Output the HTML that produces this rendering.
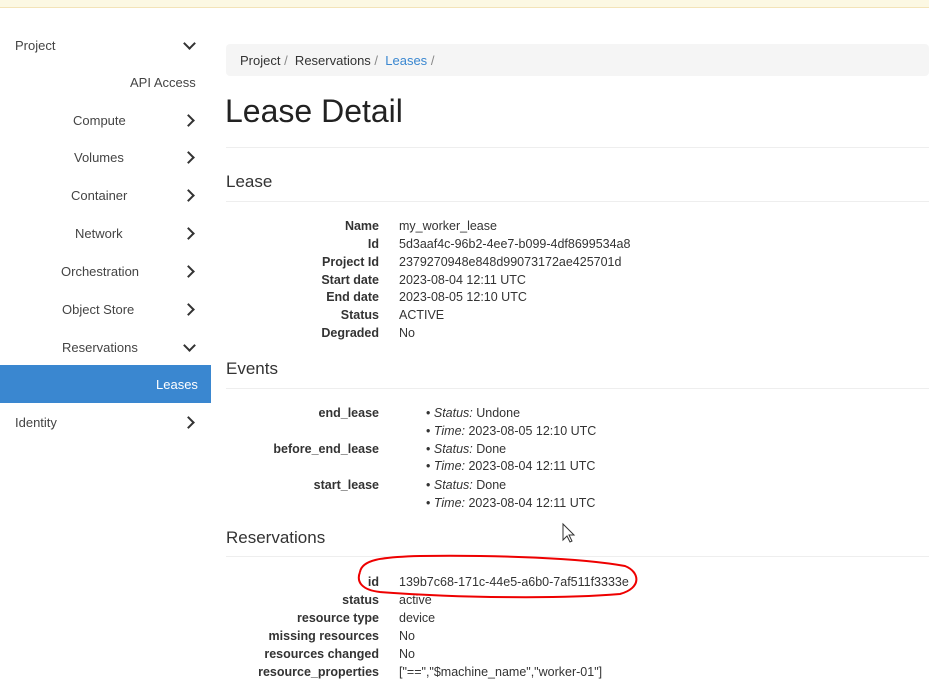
<!DOCTYPE html><html><head><style>
body{margin:0;width:929px;height:679px;overflow:hidden;background:#fff;font-family:"Liberation Sans",sans-serif;color:#333;position:relative}
.a{position:absolute;white-space:nowrap}
.banner{position:absolute;left:0;top:0;width:929px;height:7px;background:#fcf8e3;border-bottom:1px solid #f3e3b8}
.nav{font-size:13px;color:#444}
.chev{position:absolute;width:7px;height:7px;border-right:2.5px solid #333;border-bottom:2.5px solid #333}
.r{transform:rotate(-45deg)}.d{transform:rotate(45deg)}
.lbl{font-size:12.5px;font-weight:bold;text-align:right;width:200px;left:179px}
.val{font-size:12.5px;left:399px}
.hr{position:absolute;left:226px;width:703px;height:1px;background:#eee}
h2{margin:0;font-weight:normal;font-size:17px}
</style></head><body>
<div class="banner"></div>
<div class="a nav" style="left:15px;top:38px">Project</div><div class="chev d" style="left:185px;top:39px"></div>
<div class="a nav" style="left:130px;top:75px">API Access</div>
<div class="a nav" style="left:73px;top:113px">Compute</div><div class="chev r" style="left:184px;top:116px"></div>
<div class="a nav" style="left:74px;top:150px">Volumes</div><div class="chev r" style="left:184px;top:153px"></div>
<div class="a nav" style="left:71px;top:188px">Container</div><div class="chev r" style="left:184px;top:191px"></div>
<div class="a nav" style="left:75px;top:226px">Network</div><div class="chev r" style="left:184px;top:229px"></div>
<div class="a nav" style="left:61px;top:264px">Orchestration</div><div class="chev r" style="left:184px;top:267px"></div>
<div class="a nav" style="left:62px;top:302px">Object Store</div><div class="chev r" style="left:184px;top:305px"></div>
<div class="a nav" style="left:62px;top:340px">Reservations</div><div class="chev d" style="left:185px;top:341px"></div>
<div class="a" style="left:0;top:365px;width:211px;height:38px;background:#3a87d0"></div>
<div class="a nav" style="left:156px;top:377px;color:#fff">Leases</div>
<div class="a nav" style="left:15px;top:415px">Identity</div><div class="chev r" style="left:184px;top:418px"></div>

<div class="a" style="left:226px;top:44px;width:703px;height:32px;background:#f5f5f5;border-radius:4px"></div>
<div class="a" style="left:240px;top:53px;font-size:13px">Project <span style="color:#888">/</span>&nbsp; Reservations <span style="color:#888">/</span>&nbsp; <span style="color:#3a87d0">Leases</span> <span style="color:#888">/</span></div>
<div class="a" style="left:225px;top:93px;font-size:32px;color:#222">Lease Detail</div>
<div class="hr" style="top:147px"></div>
<div class="a" style="left:226px;top:172px"><h2>Lease</h2></div>
<div class="hr" style="top:201px"></div>
<div class="a lbl" style="top:219px">Name</div><div class="a val" style="top:219px">my_worker_lease</div>
<div class="a lbl" style="top:237px">Id</div><div class="a val" style="top:237px">5d3aaf4c-96b2-4ee7-b099-4df8699534a8</div>
<div class="a lbl" style="top:255px">Project Id</div><div class="a val" style="top:255px">2379270948e848d99073172ae425701d</div>
<div class="a lbl" style="top:273px">Start date</div><div class="a val" style="top:273px">2023-08-04 12:11 UTC</div>
<div class="a lbl" style="top:290px">End date</div><div class="a val" style="top:290px">2023-08-05 12:10 UTC</div>
<div class="a lbl" style="top:308px">Status</div><div class="a val" style="top:308px">ACTIVE</div>
<div class="a lbl" style="top:326px">Degraded</div><div class="a val" style="top:326px">No</div>
<div class="a" style="left:226px;top:359px"><h2>Events</h2></div>
<div class="hr" style="top:388px"></div>
<div class="a lbl" style="top:406px">end_lease</div>
<div class="a val" style="top:406px;left:426px">• <i>Status:</i> Undone</div>
<div class="a val" style="top:424px;left:426px">• <i>Time:</i> 2023-08-05 12:10 UTC</div>
<div class="a lbl" style="top:442px">before_end_lease</div>
<div class="a val" style="top:442px;left:426px">• <i>Status:</i> Done</div>
<div class="a val" style="top:459px;left:426px">• <i>Time:</i> 2023-08-04 12:11 UTC</div>
<div class="a lbl" style="top:478px">start_lease</div>
<div class="a val" style="top:478px;left:426px">• <i>Status:</i> Done</div>
<div class="a val" style="top:496px;left:426px">• <i>Time:</i> 2023-08-04 12:11 UTC</div>
<div class="a" style="left:226px;top:528px"><h2>Reservations</h2></div>
<div class="hr" style="top:556px"></div>
<div class="a lbl" style="top:575px">id</div><div class="a val" style="top:575px">139b7c68-171c-44e5-a6b0-7af511f3333e</div>
<div class="a lbl" style="top:593px">status</div><div class="a val" style="top:593px">active</div>
<div class="a lbl" style="top:611px">resource type</div><div class="a val" style="top:611px">device</div>
<div class="a lbl" style="top:629px">missing resources</div><div class="a val" style="top:629px">No</div>
<div class="a lbl" style="top:647px">resources changed</div><div class="a val" style="top:647px">No</div>
<div class="a lbl" style="top:665px">resource_properties</div><div class="a val" style="top:665px">["==","$machine_name","worker-01"]</div>
<svg class="a" style="left:0;top:0" width="929" height="679"><path d="M360 572 C362 560 380 557 420 556 C500 555 580 558 625 566 C640 572 642 588 620 594 C560 599 460 598 380 592 C362 590 356 582 360 572" fill="none" stroke="#e00" stroke-width="2"/>
<path d="M563 524 L563 540 L567 536 L570 542 L572 541 L569 535 L574 535 Z" fill="#fff" stroke="#333" stroke-width="1"/></svg>
</body></html>
